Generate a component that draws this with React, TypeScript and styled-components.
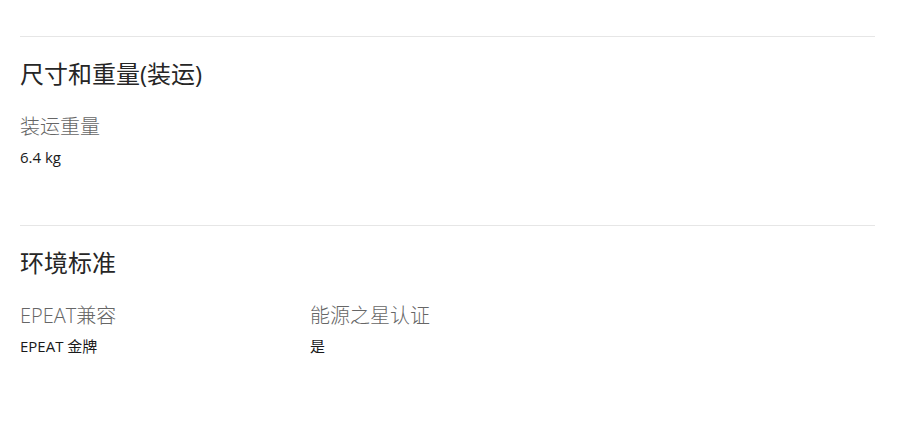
import React from 'react'
import styled, { createGlobalStyle } from 'styled-components'

const GlobalStyle = createGlobalStyle`
  body {
    margin: 0;
    background: #fff;
    font-family: "Open Sans", "Noto Sans CJK SC", sans-serif;
  }
`

const Page = styled.div`
  width: 855px;
  padding: 36px 0 0 20px;
`

const Section = styled.section`
  border-top: 1px solid #e6e6e6;
  padding: 21px 0 58px;
`

const Heading = styled.h2`
  margin: 0;
  font-size: 24px;
  line-height: 32px;
  font-weight: 400;
  color: #262626;
`

const Specs = styled.div`
  display: grid;
  grid-template-columns: 290px 290px;
  margin-top: 23px;
`

const Label = styled.div`
  font-size: 20px;
  line-height: 28px;
  font-weight: 300;
  color: #666;
`

const Value = styled.div`
  font-size: 15px;
  line-height: 20px;
  margin-top: 6px;
  color: #1a1a1a;
`

type Spec = { label: string; value: string }

const sections: { title: string; specs: Spec[] }[] = [
  { title: '尺寸和重量(装运)', specs: [{ label: '装运重量', value: '6.4 kg' }] },
  {
    title: '环境标准',
    specs: [
      { label: 'EPEAT兼容', value: 'EPEAT 金牌' },
      { label: '能源之星认证', value: '是' },
    ],
  },
]

export default function App() {
  return (
    <>
      <GlobalStyle />
      <Page>
        {sections.map((s) => (
          <Section key={s.title}>
            <Heading>{s.title}</Heading>
            <Specs>
              {s.specs.map((sp) => (
                <div key={sp.label}>
                  <Label>{sp.label}</Label>
                  <Value>{sp.value}</Value>
                </div>
              ))}
            </Specs>
          </Section>
        ))}
      </Page>
    </>
  )
}
